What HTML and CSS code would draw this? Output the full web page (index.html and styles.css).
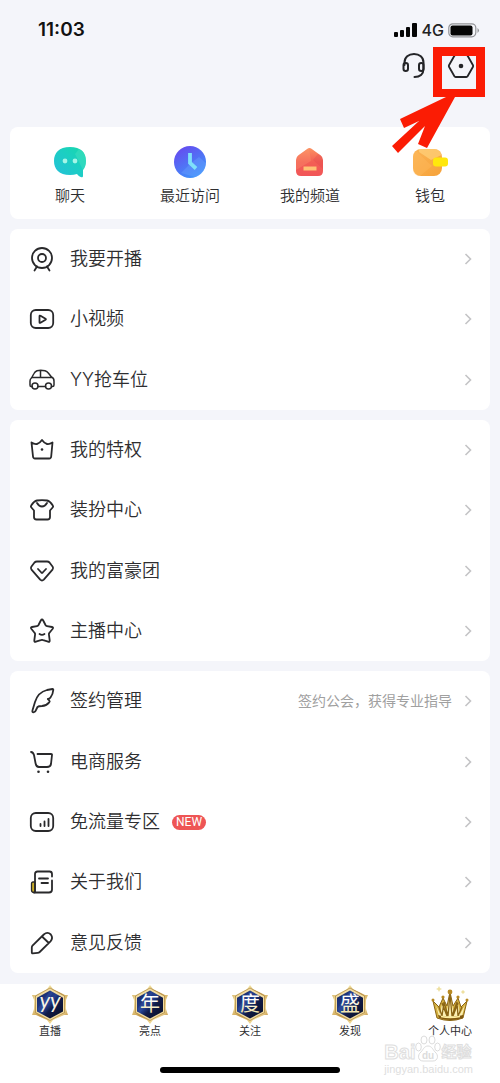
FILE: index.html
```html
<!DOCTYPE html>
<html lang="zh-CN">
<head>
<meta charset="utf-8">
<meta name="viewport" content="width=device-width, initial-scale=1">
<title>个人中心</title>
<link rel="stylesheet" href="styles.css">
</head>
<body>
<svg class="defs" aria-hidden="true">
  <defs>
    <symbol id="chevron" viewBox="0 0 8 14"><path d="M1.500 2 6.500 7l-5 5" fill="none" stroke="#c4c4c6" stroke-width="1.600"/></symbol>
    <linearGradient id="gold" x1="0" y1="0" x2="1" y2="1"><stop offset="0" stop-color="#b98d3a"/><stop offset=".25" stop-color="#f5e3a4"/><stop offset=".5" stop-color="#c79b48"/><stop offset=".75" stop-color="#f3dc98"/><stop offset="1" stop-color="#a87022"/></linearGradient>
    <linearGradient id="navy" x1="0" y1="0" x2="1" y2="1"><stop offset="0" stop-color="#16245e"/><stop offset=".45" stop-color="#24408f"/><stop offset=".6" stop-color="#111b48"/><stop offset="1" stop-color="#070d22"/></linearGradient>
    <linearGradient id="glyph" x1="0" y1="0" x2="0" y2="1"><stop offset=".4" stop-color="#ffffff"/><stop offset="1" stop-color="#efdc8c"/></linearGradient>
    <linearGradient id="teal" x1="0" y1="1" x2="1" y2="0"><stop offset="0" stop-color="#25bfdb"/><stop offset=".6" stop-color="#1bd0c0"/><stop offset="1" stop-color="#18d9a8"/></linearGradient>
    <linearGradient id="violet" x1="0" y1="0" x2=".6" y2="1"><stop offset="0" stop-color="#6a42ee"/><stop offset="1" stop-color="#3f93fa"/></linearGradient>
    <linearGradient id="coral" x1="0" y1="0" x2="0" y2="1"><stop offset="0" stop-color="#fb9160"/><stop offset=".5" stop-color="#f35f54"/><stop offset="1" stop-color="#f15558"/></linearGradient>
    <linearGradient id="amber" x1="0" y1="0" x2="1" y2="1"><stop offset="0" stop-color="#fbb454"/><stop offset="1" stop-color="#f6a23a"/></linearGradient>
    <symbol id="badge" viewBox="0 0 36 39">
      <path d="M18 0 21 4 33 10 36 10 34 15V24l2 6-4 0-11 5-3 4-3-4L4 30l-4 0 2-6V15L0 10l4 0L15 4Z" fill="url(#gold)"/>
      <path d="M18 3 32.500 11v16.500L18 35.500 3.500 27.500V11Z" fill="#f2dda0" stroke="#9c7431" stroke-width=".6"/>
      <path d="M18 5.500 31 12.700v13.800L18 33.500 5 26.500V12.700Z" fill="url(#navy)"/>
      <path d="M5.500 24 18 5.500l3 2L8 28Z" fill="#4666c0" opacity=".25"/>
    </symbol>
  </defs>
</svg>
<div class="app">
  <div class="status">
    <time class="clock">11:03</time>
    <div class="signals">
      <svg width="24" height="15" viewBox="0 0 24 15" aria-hidden="true"><g fill="#050505"><rect x="0" y="9" width="4" height="5" rx="1"/><rect x="6" y="7" width="4" height="7" rx="1"/><rect x="12" y="4" width="4" height="10" rx="1"/><rect x="18" y="0" width="5" height="14" rx="1"/></g></svg>
      <span class="network">4G</span>
      <svg width="32" height="15" viewBox="0 0 32 15" aria-hidden="true"><rect x=".8" y=".8" width="27" height="13" rx="4" fill="#f5f6fa" stroke="#929397" stroke-width="1.200"/><rect x="2.500" y="2.500" width="22" height="10" rx="2" fill="#050505"/><path d="M29.500 5q3 2.300 0 5Z" fill="#929397"/></svg>
    </div>
  </div>
  <header class="actions">
    <button class="icon-button" aria-label="客服">
      <svg width="26" height="28" viewBox="0 0 26 28" fill="none" stroke="#242528" stroke-width="2" stroke-linecap="round"><path d="M3.500 13V10.500C3.500 5.200 7.500 2 13 2s9.500 3.200 9.500 8.500v6.500c0 5-3.500 8-9 8"/><rect x="2.500" y="11" width="4.500" height="8" rx="2.200"/><rect x="18" y="11" width="4.500" height="8" rx="2.200"/></svg>
    </button>
    <button class="icon-button marked" aria-label="设置">
      <svg width="28" height="28" viewBox="0 0 28 28"><path d="M8.600 3h10.800q.8 0 1.200.7l5.400 9.600q.4.700 0 1.400l-5.400 9.600q-.4.700-1.200.7H8.600q-.8 0-1.200-.7L2 14.700q-.4-.7 0-1.400L7.400 3.700Q7.800 3 8.600 3Z" fill="none" stroke="#242528" stroke-width="1.800"/><circle cx="14" cy="14" r="2.300" fill="#242528"/></svg>
      <svg class="pointer" width="94" height="108" viewBox="0 0 94 108" aria-hidden="true"><path fill="#fb1c04" fill-rule="evenodd" d="M41 1H93V51H63L35 102 26 98 33 80 6 107 0 100 27 75 12 82 8 73 54 51H41ZM50 10V43H84V10Z"/></svg>
    </button>
  </header>
  <main class="content">
    <nav class="card shortcuts" aria-label="快捷入口">
      <a class="shortcut" href="#"><svg width="34" height="34" viewBox="0 0 34 34"><path d="M17 2c11 0 16 5.500 16 14 0 4-1.500 7.500-3 9v6q0 1.600-1.500 1.200c-2-.6-3.500-1.800-4.500-3.200Q21 30 17 30C6 30 1 24 1 16S6 2 17 2Z" fill="url(#teal)"/><path d="m22 9 4-5c4 2 7 6 7 12 0 4-1.500 7-3 9Z" fill="#43e0c1" opacity=".5"/><circle cx="12" cy="16" r="2.400" fill="#a5f5e7"/><circle cx="22" cy="16" r="2.400" fill="#a5f5e7"/></svg><span>聊天</span></a>
      <a class="shortcut" href="#"><svg width="34" height="34" viewBox="0 0 34 34"><circle cx="17" cy="17" r="16" fill="url(#violet)"/><path d="m18 18 8-6 7 6c0 7-6 13-11 14L8 28Z" fill="#71a7ff" opacity=".35"/><path d="M17 8v10l6 5.500" fill="none" stroke="#7fe0fa" stroke-width="3.800"/></svg><span>最近访问</span></a>
      <a class="shortcut" href="#"><svg width="34" height="34" viewBox="0 0 34 34"><path d="m14.500 3.700-9 6.500Q3 12 3 15v11q0 5 5 5h17q5 0 5-5V15q0-3-2.500-4.800l-9-6.500q-2-1.500-4 0Z" fill="url(#coral)"/><path d="m16 3 2 13-15 9V15q0-3 2.500-4.800Z" fill="#ffa276" opacity=".28"/><path d="m20 15 5-6 2.500 1.200Q30 12 30 15v9Z" fill="#dc3d4b" opacity=".25"/><path d="M10.500 23.500h13" stroke="#ffc174" stroke-width="4"/></svg><span>我的频道</span></a>
      <a class="shortcut" href="#"><svg width="38" height="34" viewBox="0 0 38 34"><rect x="2" y="4" width="29" height="27" rx="8" fill="url(#amber)"/><path d="M8 4h15q6 0 7.500 6L20 15 8 7Z" fill="#ffd27c" opacity=".7"/><path d="m5 6 16 15-12 10Q2 31 2 23V12Q2 8 5 6Z" fill="#ffbc5f" opacity=".4"/><rect x="22" y="12.500" width="15" height="9" rx="3" fill="#ffe70c"/></svg><span>钱包</span></a>
    </nav>

    <ul class="card menu rows-3">
      <li><a class="row" href="#"><svg class="icon" viewBox="0 0 26 26"><circle cx="13" cy="12" r="10"/><circle cx="13" cy="12" r="4"/><path d="m8 20.500-2.500 4m12.500-4 2.500 4"/></svg><span class="label">我要开播</span><svg class="go"><use href="#chevron"/></svg></a></li>
      <li><a class="row" href="#"><svg class="icon" viewBox="0 0 26 26"><rect x="1.800" y="4" width="22.400" height="18" rx="5"/><path d="M10.500 10.300v6q0 1 1 .5l5-3q.8-.5 0-1l-5-3q-1-.5-1 .5Z"/></svg><span class="label">小视频</span><svg class="go"><use href="#chevron"/></svg></a></li>
      <li><a class="row" href="#"><svg class="icon thin" viewBox="0 0 26 26"><path d="M3.200 19.500H2q-1 0-1-1.500V14q0-2 1.500-3L5 6.500Q6 4.500 8 3.700q3.500-1 8 0 2 .6 3.500 2.500L22.500 10q2.500 1 2.500 4v4q0 1.500-1.500 1.500H22.500M9 19.500h7.500M2.500 10.500h20M11.500 3.500v7"/><circle cx="6" cy="19" r="3"/><circle cx="19.500" cy="19" r="3"/></svg><span class="label">YY抢车位</span><svg class="go"><use href="#chevron"/></svg></a></li>
    </ul>

    <ul class="card menu rows-4">
      <li><a class="row" href="#"><svg class="icon" viewBox="0 0 26 26"><path d="M2.500 5.500q3 2 5.500 1.500Q10.500 6.500 13 3q2.500 3.500 5 4 2.500.5 5.500-1.500l-1.300 14q-.2 2-2 2H6q-1.800 0-2-2Z"/><circle class="dot" cx="13" cy="12.500" r="1.300"/></svg><span class="label">我的特权</span><svg class="go"><use href="#chevron"/></svg></a></li>
      <li><a class="row" href="#"><svg class="icon" viewBox="0 0 26 26"><path d="M8 3.500Q5 4 2.200 8.500q-.7 1 .2 2l2.600 3V20q0 2.500 2.500 2.500h11Q21 22.500 21 20v-6.500l2.600-3q.9-1 .2-2Q21 4 18 3.500Q13 2.700 8 3.500ZM8 6C9.500 8.500 11 9.500 13 9.500s3.500-1 5-3.500"/></svg><span class="label">装扮中心</span><svg class="go"><use href="#chevron"/></svg></a></li>
      <li><a class="row" href="#"><svg class="icon" viewBox="0 0 26 26"><path d="M8 3.500h10q1.500 0 2.500 1l3.200 4.200q1 1.500-.2 2.900l-8.700 10q-1.800 1.700-3.600 0l-8.700-10Q1.300 10.200 2.300 8.700l3.200-4.200q1-1 2.500-1ZM9 11l3.300 3.500q.7.700 1.400 0l3.300-3.500"/></svg><span class="label">我的富豪团</span><svg class="go"><use href="#chevron"/></svg></a></li>
      <li><a class="row" href="#"><svg class="icon" viewBox="0 0 26 26"><path d="M11.800 2.500 9.500 7Q9 7.900 8 8.100l-5 .9q-1.700.4-.7 1.800l3.200 3.900q.8.700.6 1.700l-.8 6q-.2 2 1.600 1.200l4.900-1.500q1.200-.4 2.400 0l4.900 1.500q1.800.8 1.600-1.200l-.8-6q-.2-1 .6-1.700l3.200-3.900q1-1.400-.7-1.800l-5-.9q-1-.2-1.500-1.100L14.200 2.500Q13 .5 11.800 2.500ZM10.500 16q2.500 1.700 5 0"/></svg><span class="label">主播中心</span><svg class="go"><use href="#chevron"/></svg></a></li>
    </ul>

    <ul class="card menu rows-5">
      <li><a class="row" href="#"><svg class="icon" viewBox="0 0 26 26"><path d="M5 24.200q-2.200.5-1.500-2L6 14C8 7.500 12 3.500 18 2l5.500-1q1 0 .8 1-.3 4-2.800 7.500-1 1.500-2.700 1.500l1.400 1.400q1 1 0 2-3 3.500-7.200 3.600-3.500 0-4.500 1L7 22Q6.500 24 5 24.200Z"/></svg><span class="label">签约管理</span><span class="hint">签约公会，获得专业指导</span><svg class="go"><use href="#chevron"/></svg></a></li>
      <li><a class="row" href="#"><svg class="icon" viewBox="0 0 26 26"><path d="M2 3q2.200.3 3 3l1.600 8.500Q7.200 18 10 18h8q3.500 0 4-3L23 6q.1-1-1-1H8.500"/><circle class="dot" cx="9.500" cy="22.800" r="1.300"/><circle class="dot" cx="19" cy="22.800" r="1.300"/></svg><span class="label">电商服务</span><svg class="go"><use href="#chevron"/></svg></a></li>
      <li><a class="row" href="#"><svg class="icon" viewBox="0 0 26 26"><rect x="1.800" y="4" width="22.400" height="18" rx="5"/><path d="M11.500 15v2m4-4.500V17m4-7v7"/></svg><span class="label">免流量专区</span><span class="new">NEW</span><svg class="go"><use href="#chevron"/></svg></a></li>
      <li><a class="row" href="#"><svg class="icon" viewBox="0 0 26 26"><path d="M6 13H4q-1.500 0-1.500 1.500V21q0 2.500 2.500 2.500h1Z" fill="#c9ad27" stroke-width="1.300"/><path d="M6 23.500V5q0-2.500 2.500-2.500h12Q23 2.500 23 5v2.500m0 4V20.500q0 3-3 3H5M10 9.500h9M12.500 14H19"/></svg><span class="label">关于我们</span><svg class="go"><use href="#chevron"/></svg></a></li>
      <li><a class="row" href="#"><svg class="icon" viewBox="0 0 26 26"><path d="m3.500 15.700 11.300-11.200q3.700-3.200 7 0 2.700 3.500-.3 6.800L10.700 22q-.8.800-2 .8l-5 .5q-1 0-.9-1l0-4.700q0-1.100.7-1.900ZM13 6.500l6.800 6.500"/></svg><span class="label">意见反馈</span><svg class="go"><use href="#chevron"/></svg></a></li>
    </ul>
  </main>
  <footer class="footer">
    <nav class="tabs" aria-label="主导航">
      <a class="tab" href="#"><svg width="36" height="39" viewBox="0 0 36 39"><use href="#badge"/><text class="badge-latin" x="18" y="23" text-anchor="middle" fill="#f8f4e4">yy</text></svg><span>直播</span></a>
      <a class="tab" href="#"><svg width="36" height="39" viewBox="0 0 36 39"><use href="#badge"/><text class="badge-text" x="18" y="26" text-anchor="middle" fill="url(#glyph)">年</text></svg><span>亮点</span></a>
      <a class="tab" href="#"><svg width="36" height="39" viewBox="0 0 36 39"><use href="#badge"/><text class="badge-text" x="18" y="26" text-anchor="middle" fill="url(#glyph)">度</text></svg><span>关注</span></a>
      <a class="tab" href="#"><svg width="36" height="39" viewBox="0 0 36 39"><use href="#badge"/><text class="badge-text" x="18" y="26" text-anchor="middle" fill="url(#glyph)">盛</text></svg><span>发现</span></a>
      <a class="tab" href="#"><svg width="38" height="39" viewBox="0 0 38 39"><path d="m2 16 6 6 4-9 4 8 3-14 3 14 5-8 3 9 6-6-4 17q-13 5-26 0Z" fill="#d5b141" stroke="#8a6414" stroke-width="1"/><path d="m5 20 4 9 2-10 4 10 4-18 4 18 4-10 2 10 5-9-3 11q-12 3-23 0Z" fill="#fbf0b5"/><path d="m8 22 3 9 2-14 4 14 2-22 2 22 5-14 1 14 4-9M11 18l5 13m11-13-5 13" fill="none" stroke="#8a6516" stroke-width="1.300"/><path d="M7 30q12 4 25 0v3q-12 4-24 0Z" fill="#805810"/><path d="M10 31.500q9 2 19 0" fill="none" stroke="#fff0a0" stroke-width="1.500"/><g fill="#b88a24"><circle cx="2" cy="15" r="1.500"/><circle cx="12" cy="12" r="1.600"/><circle cx="19" cy="7" r="2.400"/><circle cx="27" cy="12" r="1.600"/><circle cx="36" cy="15" r="1.500"/></g><path d="m8 1 1 2 2 1-2 1-1 2-1-2-2-1 2-1ZM32 5l1 1 1 1-1 1-1 1-1-1-1-1 1-1Z" fill="#eee0a0"/></svg><span>个人中心</span></a>
    </nav>
    <div class="home-indicator"></div>
    <div class="watermark" aria-hidden="true">
      <div class="watermark-brand"><span>Bai</span><svg width="26" height="28" viewBox="0 0 26 28"><g fill="#fff" fill-opacity=".65" stroke="#dcdcdc"><ellipse cx="9" cy="5" rx="3" ry="4"/><ellipse cx="17" cy="5" rx="3" ry="4"/><ellipse cx="3.500" cy="12" rx="2.800" ry="4"/><ellipse cx="22.500" cy="12" rx="2.800" ry="4"/><path d="M13 11c4 0 5 4 7 6 4 3 3 9-2 9H8c-5 0-6-6-2-9 2-2 3-6 7-6Z"/></g><text class="paw-text" x="13" y="24" text-anchor="middle">du</text></svg><span>经验</span></div>
      <div class="watermark-site">jingyan.baidu.com</div>
    </div>
  </footer>
</div>
</body>
</html>
```

FILE: styles.css
```css
* { box-sizing: border-box; }

body {
  margin: 0;
  background: #f4f5fa;
  color: #2e2e30;
  font-family: Inter, "Noto Sans CJK SC", sans-serif;
}

a { color: inherit; text-decoration: none; }
svg { display: block; flex: none; }
.defs { position: absolute; width: 0; height: 0; }

.app {
  display: flex;
  flex-direction: column;
  min-height: 100vh;
}

.status {
  display: flex;
  align-items: center;
  justify-content: space-between;
  padding: 18px 20px 0 38px;
  height: 42px;
}
.clock {
  color: #111;
  font: 600 19px/24px Inter, sans-serif;
}
.signals { display: flex; align-items: center; gap: 4px; }
.network {
  color: #222;
  font: 500 16px/24px Inter, sans-serif;
}

.actions {
  display: flex;
  justify-content: flex-end;
  gap: 18px;
  padding: 10px 25px 0 0;
  height: 85px;
}
.icon-button {
  display: block;
  position: relative;
  width: 28px;
  height: 28px;
  padding: 0;
  border: 0;
  background: none;
}
.pointer {
  position: absolute;
  top: -6px;
  right: -11px;
  z-index: 1;
  pointer-events: none;
}

.content {
  display: flex;
  flex: 1;
  flex-direction: column;
  gap: 10px;
  padding: 0 10px 11px;
}
.card {
  margin: 0;
  border-radius: 8px;
  background: #fff;
}

.shortcuts {
  display: grid;
  grid-template-columns: repeat(4, 1fr);
  padding: 18px 0 12px;
}
.shortcut {
  display: flex;
  flex-direction: column;
  align-items: center;
  gap: 6px;
  font-size: 15px;
  font-weight: 350;
  line-height: 22px;
}

.menu {
  display: flex;
  flex-direction: column;
  padding: 0;
  list-style: none;
}
.menu li { display: flex; flex: 1; }
.rows-3 { flex: 3; }
.rows-4 { flex: 4; }
.rows-5 { flex: 5; }
.row {
  display: flex;
  flex: 1;
  align-items: center;
  padding: 0 18px 0 19px;
  font-size: 18px;
  font-weight: 350;
  line-height: 28px;
}
.icon {
  width: 26px;
  height: 26px;
  margin-right: 15px;
  fill: none;
  stroke: #29292b;
  stroke-width: 1.8;
  stroke-linecap: round;
  stroke-linejoin: round;
}
.icon.thin { stroke-width: 1.5; }
.dot { fill: #29292b; stroke: none; }
.go {
  width: 8px;
  height: 14px;
  margin-left: auto;
}
.hint {
  margin-left: auto;
  color: #a0a0a0;
  font-size: 14px;
  font-weight: 400;
}
.hint + .go { margin-left: 12px; }
.new {
  margin-left: 12px;
  padding: 0 4px;
  border-radius: 8px;
  background: #ee5555;
  color: #fff;
  font: 400 12px/15px Roboto, sans-serif;
}

.footer {
  position: relative;
  display: flex;
  flex-direction: column;
  align-items: center;
  justify-content: space-between;
  height: 99px;
  padding-bottom: 10px;
  background: #fff;
}
.tabs {
  display: grid;
  grid-template-columns: repeat(5, 1fr);
  align-self: stretch;
  padding-top: 1px;
}
.tab {
  display: flex;
  flex-direction: column;
  align-items: center;
  font-size: 11px;
  line-height: 15px;
}
.badge-text { font: 400 20px "Noto Sans CJK SC", sans-serif; }
.badge-latin { font: italic 400 22px Lato, sans-serif; }

.home-indicator {
  width: 36%;
  height: 6px;
  border-radius: 3px;
  background: #000;
}

.watermark {
  position: absolute;
  right: 27px;
  bottom: 8px;
  color: #fff;
  -webkit-text-stroke: 1px #dedede;
  pointer-events: none;
}
.watermark-brand {
  display: flex;
  align-items: flex-end;
  font: 700 20px/22px "Liberation Sans", "Noto Sans CJK SC", sans-serif;
}
.watermark-brand span:last-child { font-size: 15px; }
.paw-text {
  fill: #dcdcdc;
  stroke: none;
  -webkit-text-stroke: 0;
  font: 700 10px "Liberation Sans", sans-serif;
}
.watermark-site {
  color: #dedede;
  -webkit-text-stroke: 0;
  font: 11px/12px "Liberation Sans", sans-serif;
}
```
